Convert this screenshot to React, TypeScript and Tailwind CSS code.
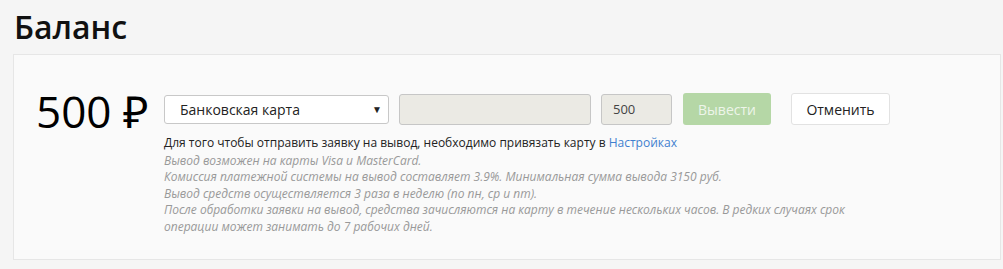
import React from 'react';

const notes = [
  'Вывод возможен на карты Visa и MasterCard.',
  'Комиссия платежной системы на вывод составляет 3.9%. Минимальная сумма вывода 3150 руб.',
  'Вывод средств осуществляется 3 раза в неделю (по пн, ср и пт).',
  'После обработки заявки на вывод, средства зачисляются на карту в течение нескольких часов. В редких случаях срок операции может занимать до 7 рабочих дней.',
];

export default function App() {
  return (
    <div className="min-h-[269px] bg-[#f5f5f5] pl-[13px] pr-[2px] pt-[5px] pb-[10px] text-[#222] font-['Open_Sans',sans-serif]">
      <h1 className="text-[32px] font-semibold leading-[43px] pl-[1px] text-[#111]">Баланс</h1>
      <div className="mt-[6px] border border-[#e6e6e6] bg-[#fafafa] pl-[22px] pt-[34px] pb-[24px]">
        <div className="flex items-start">
          <div className="text-[44px] leading-[44px] text-black w-[128px] shrink-0">500 ₽</div>
          <div className="pt-[4px]">
            <div className="flex items-center">
              <div className="relative w-[225px] h-[29px] rounded-[3px] border border-[#c8c8c8] bg-white flex items-center pl-[15px] text-[14px] text-[#222]">
                Банковская карта
                <span className="absolute right-[6px] top-[6px] text-[10px] text-[#222]">▼</span>
              </div>
              <div className="ml-[10px] w-[192px] h-[31px] rounded-[3px] border border-[#c6c6c6] bg-[#ebeae4]" />
              <div className="ml-[10px] w-[71px] h-[31px] mt-[1px] rounded-[3px] border border-[#c6c6c6] bg-[#ebeae4] flex items-center pl-[11px] text-[13px] text-[#444]">
                500
              </div>
              <button className="ml-[11px] w-[88px] h-[32px] rounded-[3px] bg-[#b5d7a6] text-[14px] text-[#eef5ea]">
                Вывести
              </button>
              <button className="ml-[20px] w-[99px] h-[32px] rounded-[3px] border border-[#e2e2e2] bg-white text-[14px] text-[#222]">
                Отменить
              </button>
            </div>
            <div className="mt-[9px] text-[12px] leading-[18px] text-[#222]">
              Для того чтобы отправить заявку на вывод, необходимо привязать карту в{' '}
              <a className="text-[#3f7fcf]">Настройках</a>
            </div>
            <div className="mt-[1px] max-w-[720px] text-[12px] leading-[16.4px] italic text-[#999]">
              {notes.map((n) => (
                <div key={n}>{n}</div>
              ))}
            </div>
          </div>
        </div>
      </div>
    </div>
  );
}
